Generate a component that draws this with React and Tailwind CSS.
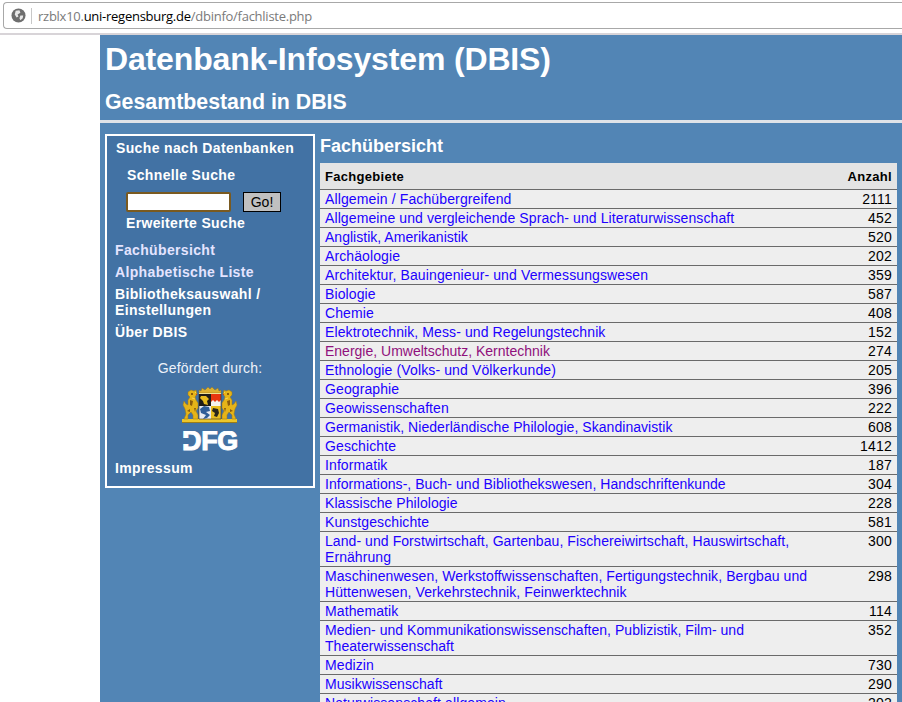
const ROWS = [
  [["Allgemein / Fachübergreifend"], "2111", false, "tracking-[0.13px]"],
  [["Allgemeine und vergleichende Sprach- und Literaturwissenschaft"], "452", false, "tracking-[0.1px]"],
  [["Anglistik, Amerikanistik"], "520", false, "tracking-[0.02px]"],
  [["Archäologie"], "202", false, "tracking-[0.1px]"],
  [["Architektur, Bauingenieur- und Vermessungswesen"], "359", false, "tracking-[0.12px]"],
  [["Biologie"], "587", false, "tracking-[0.1px]"],
  [["Chemie"], "408", false, "tracking-[0.1px]"],
  [["Elektrotechnik, Mess- und Regelungstechnik"], "152", false, "tracking-[0.1px]"],
  [["Energie, Umweltschutz, Kerntechnik"], "274", true, "tracking-[0px]"],
  [["Ethnologie (Volks- und Völkerkunde)"], "205", false, "tracking-[0.13px]"],
  [["Geographie"], "396", false, "tracking-[0.1px]"],
  [["Geowissenschaften"], "222", false, "tracking-[0.1px]"],
  [["Germanistik, Niederländische Philologie, Skandinavistik"], "608", false, "tracking-[0.05px]"],
  [["Geschichte"], "1412", false, "tracking-[0.1px]"],
  [["Informatik"], "187", false, "tracking-[0.1px]"],
  [["Informations-, Buch- und Bibliothekswesen, Handschriftenkunde"], "304", false, "tracking-[0.05px]"],
  [["Klassische Philologie"], "228", false, "tracking-[0.05px]"],
  [["Kunstgeschichte"], "581", false, "tracking-[0.1px]"],
  [["Land- und Forstwirtschaft, Gartenbau, Fischereiwirtschaft, Hauswirtschaft,", "Ernährung"], "300", false, "tracking-[0.07px]"],
  [["Maschinenwesen, Werkstoffwissenschaften, Fertigungstechnik, Bergbau und", "Hüttenwesen, Verkehrstechnik, Feinwerktechnik"], "298", false, "tracking-[0.08px]"],
  [["Mathematik"], "114", false, "tracking-[0.1px]"],
  [["Medien- und Kommunikationswissenschaften, Publizistik, Film- und", "Theaterwissenschaft"], "352", false, "tracking-[0.03px]"],
  [["Medizin"], "730", false, "tracking-[0.1px]"],
  [["Musikwissenschaft"], "290", false, "tracking-[0.05px]"],
  [["Naturwissenschaft allgemein"], "202", false, "tracking-[0.1px]"],
];

function Lion({ flip }) {
  return (
    <g transform={flip ? "translate(56 0) scale(-1 1)" : undefined}>
      <path d="M6 5 L9 3 L12 4 L14 3 L15 7 L13 10 L14 13 L16 16 L16 21 L14 24 L16 28 L16 32 L11 32 L11 28 L9 25 L6 28 L6 32 L2 32 L4 27 L3 22 L1 18 L2 14 L4 17 L6 18 L6 13 L8 10 L6 8 Z" fill="#e5b418" stroke="#a07a10" strokeWidth="0.5" />
      <path d="M9 6 L11 6 L11 8 L9 8 Z M8 13 L11 14 L10 19 L8 18 Z M12 21 L14 21 L13 25 Z M5 24 L8 22 L8 25 Z" fill="#8a5c0c" />
      <path d="M13 5 L14 6 M10 11 L13 12" stroke="#f6e070" strokeWidth="0.7" />
      <rect x="14" y="7" width="1" height="1" fill="#d8381a" />
    </g>
  );
}

function Crest() {
  return (
    <svg width="56" height="36" viewBox="0 0 56 36" className="block">
      <rect x="0" y="32" width="55" height="4" fill="#ecc62a" />
      <rect x="0" y="35" width="55" height="1" fill="#9a7c18" />
      <Lion />
      <Lion flip />
      <path d="M17 6 L17 3 L19 4 L20 1 L23 3 L26 0 L28 2 L30 0 L33 3 L36 1 L37 4 L39 3 L39 6 Z" fill="#dcb030" stroke="#8a6a14" strokeWidth="0.4" />
      <rect x="17" y="6" width="22" height="1" fill="#f0e090" />
      <rect x="17" y="7" width="12" height="12" fill="#1f1c18" />
      <path d="M19 9 L24 9 L27 12 L25 14 L26 18 L22 17 L21 14 L18 11 Z" fill="#e7bb1e" />
      <rect x="29" y="7" width="10" height="12" fill="#e8350f" />
      <path d="M29 15 L31 13 L33 15 L35 13 L37 15 L39 13 L39 19 L29 19 Z" fill="#f5f2ee" />
      <rect x="17" y="19" width="12" height="13" fill="#e9ebf2" />
      <path d="M18 22 L22 19 L27 20 L28 24 L24 25 L28 28 L25 31 L21 32 L24 28 L19 26 Z" fill="#2f5d98" />
      <rect x="29" y="19" width="10" height="13" fill="#e9be22" />
      <path d="M31 21 L36 22 L37 26 L35 30 L32 29 L33 26 L30 24 Z" fill="#2a261c" />
      <path d="M17 7 L17 32 L39 32 L39 7" fill="none" stroke="#3a3020" strokeWidth="0.6" />
    </svg>
  );
}

function Dfg() {
  return (
    <div className="relative w-[56px] h-[20px] overflow-hidden flex items-center justify-center">
      <span className="font-['Liberation_Sans',sans-serif] font-bold text-[27px] leading-[20px] text-white tracking-[-0.3px] [-webkit-text-stroke:1px_white]">DFG</span>
      <span className="absolute left-0 top-[7px] w-[9px] h-[6px] bg-[#4272a4]" />
    </div>
  );
}

function SideLink({ children, className = "" }) {
  return <div className={`font-bold text-[14px] leading-[16px] tracking-[0.35px] ${className}`}>{children}</div>;
}

export default function App() {
  return (
    <div className="w-[902px] h-[702px] overflow-hidden bg-white font-['Liberation_Sans',Arial,sans-serif] text-[14px]">
      <div className="h-[35px] bg-white pt-[2px] pl-[3px] border-b-2 border-[#d8d4d8]">
        <div className="h-[27px] flex items-center rounded-l-[4px] border border-r-0 border-[#a8a8a8]">
          <svg width="15" height="15" viewBox="0 0 16 16" className="ml-[7px]">
            <circle cx="8" cy="8" r="7.5" fill="#6e6e6e" />
            <path d="M5 3 L9 2.5 L10 5 L7 7 L8 9 L6 10 L4 7 Z M10 8 L13 8 L12.5 11 L10 13 L9 11 Z" fill="#e8e8e8" />
          </svg>
          <div className="w-px h-[16px] bg-[#c8c8c8] ml-[5px]" />
          <div className="ml-[6px] font-['Open_Sans',sans-serif] text-[13px] tracking-[-0.26px] leading-[20px] text-[#7a7a7a]">
            rzblx10.<span className="text-black">uni-regensburg.de</span>/dbinfo/fachliste.php
          </div>
        </div>
      </div>

      <div className="ml-[100px] h-[667px] bg-[#5285b5] text-white overflow-hidden">
        <header className="h-[85px] pl-[5px]">
          <h1 className="pt-[6px] font-bold text-[32px] tracking-[-0.15px] leading-[37px]">Datenbank-Infosystem (DBIS)</h1>
          <h2 className="pt-[12px] font-bold text-[21.33px] leading-[24px]">Gesamtbestand in DBIS</h2>
        </header>
        <div className="h-[3px] bg-[#dfe3e8]" />

        <div className="flex items-start pl-[5px] pr-[5px] pt-[11px]">
          <aside className="w-[210px] h-[354px] shrink-0 border-2 border-white bg-[#4272a4] pl-[8px] pt-[4px]">
            <SideLink className="pl-px">Suche nach Datenbanken</SideLink>
            <SideLink className="pl-[12px] pt-[11px]">Schnelle Suche</SideLink>
            <div className="flex items-center pl-[11px] pt-[9px]">
              <div className="w-[105px] h-[20px] bg-white border-2 border-[#7a5a20] rounded-[2px]" />
              <div className="ml-[12px] w-[38px] h-[20px] bg-[#c0c0c0] border border-black text-black text-[14px] leading-[18px] text-center">Go!</div>
            </div>
            <SideLink className="pl-[11px] pt-[3px]">Erweiterte Suche</SideLink>
            <SideLink className="pt-[11px] text-[#e4e4ff]">Fachübersicht</SideLink>
            <SideLink className="pt-[6px] text-[#e4e4ff]">Alphabetische Liste</SideLink>
            <SideLink className="pt-[6px]">Bibliotheksauswahl /<br />Einstellungen</SideLink>
            <SideLink className="pt-[6px]">Über DBIS</SideLink>
            <div className="pt-[20px] pr-[8px] flex flex-col items-center text-[#eef2fa] leading-[16px] tracking-[0.15px]">
              <div>Gefördert durch:</div>
              <div className="pt-[11px]"><Crest /></div>
              <div className="pt-[8px]"><Dfg /></div>
            </div>
            <SideLink className="pt-[9px]">Impressum</SideLink>
          </aside>

          <main className="ml-[5px] flex-1 min-w-0">
            <h3 className="font-bold text-[18px] leading-[21px] pt-[2px] h-[29px]">Fachübersicht</h3>
            <div className="bg-[#eeeeee] text-black">
              <div className="flex justify-between h-[27px] pt-[6px] bg-[#e4e4e4] border-b border-[#6a6a6a] px-[5px] font-bold text-[13px] leading-[16px] tracking-[0.3px]">
                <span>Fachgebiete</span><span>Anzahl</span>
              </div>
              {ROWS.map(([lines, n, visited, track]) => (
                <div key={n + lines[0]} className="flex justify-between pl-[5px] pr-[5px] pt-px pb-px border-b border-[#6a6a6a] leading-[16px]">
                  <div className={`${visited ? "text-[#90107c]" : "text-[#2000ff]"} ${track}`}>
                    {lines.map((l) => <div key={l}>{l}</div>)}
                  </div>
                  <div className="tracking-[0.2px]">{n}</div>
                </div>
              ))}
            </div>
          </main>
        </div>
      </div>
    </div>
  );
}
